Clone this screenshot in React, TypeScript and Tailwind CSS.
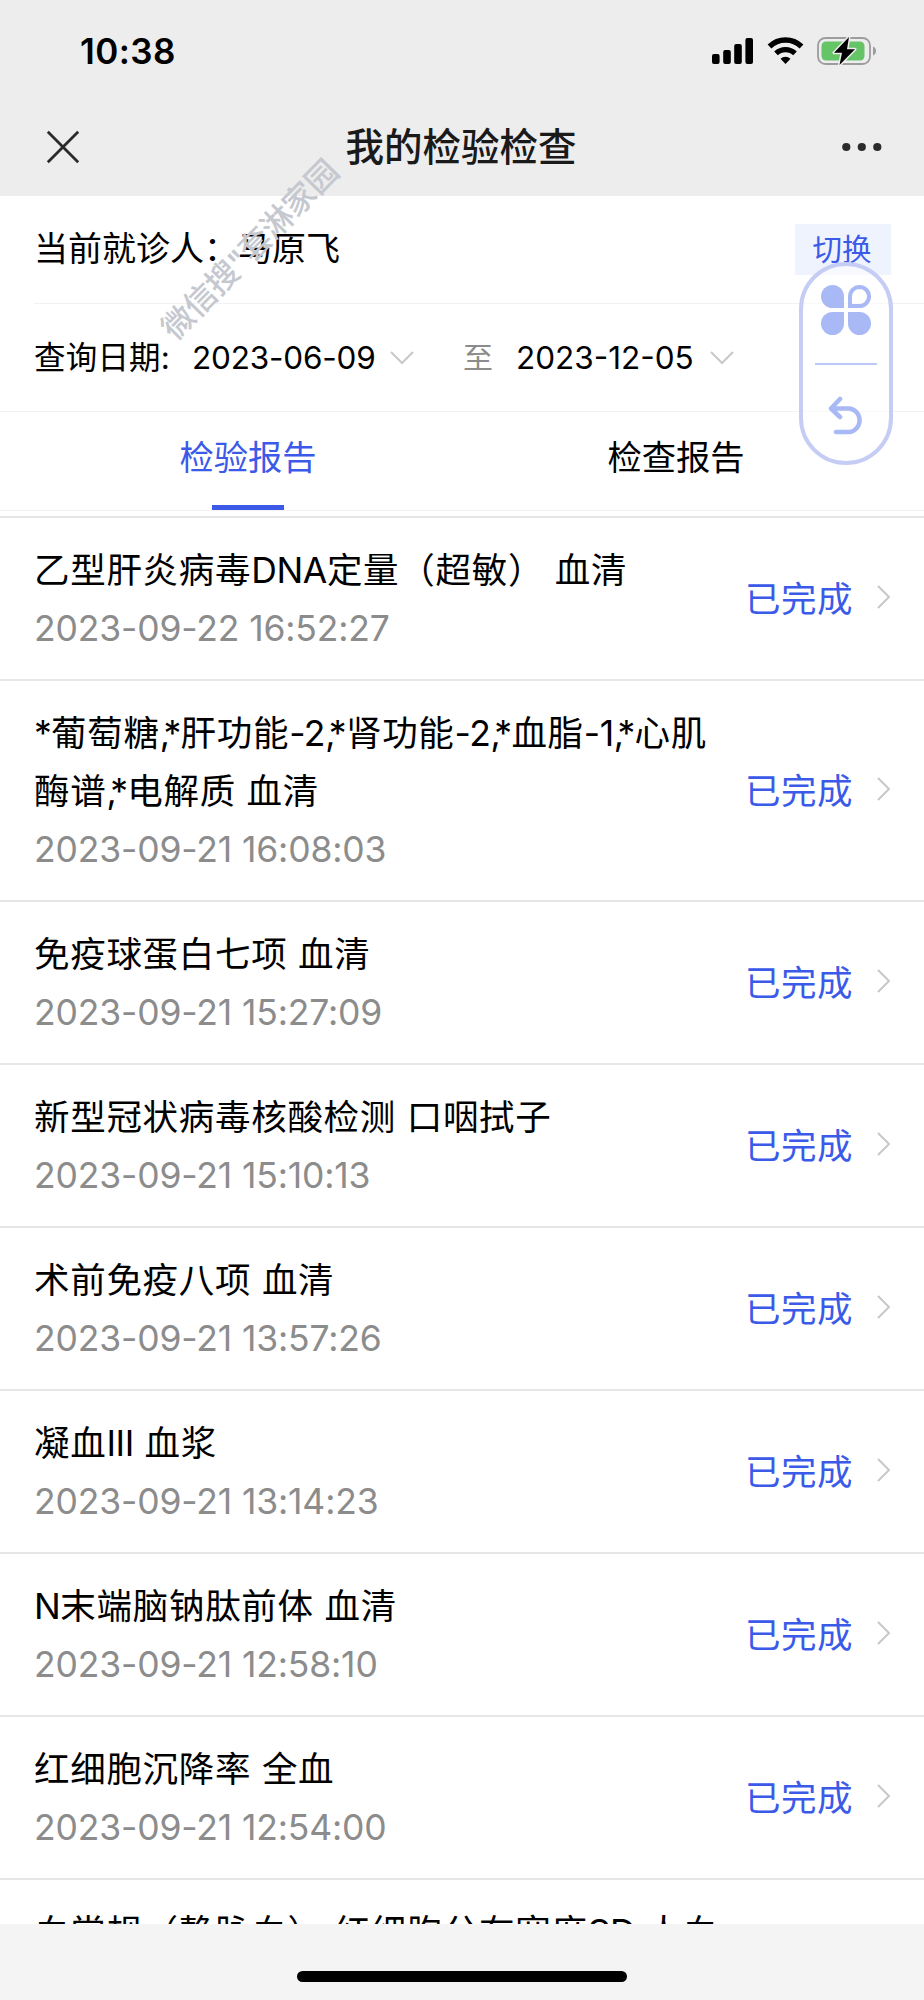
type Report = {
  name: string[];
  time: string;
};

const reports: Report[] = [
  { name: ['乙型肝炎病毒DNA定量（超敏） 血清'], time: '2023-09-22 16:52:27' },
  { name: ['*葡萄糖,*肝功能-2,*肾功能-2,*血脂-1,*心肌', '酶谱,*电解质 血清'], time: '2023-09-21 16:08:03' },
  { name: ['免疫球蛋白七项 血清'], time: '2023-09-21 15:27:09' },
  { name: ['新型冠状病毒核酸检测 口咽拭子'], time: '2023-09-21 15:10:13' },
  { name: ['术前免疫八项 血清'], time: '2023-09-21 13:57:26' },
  { name: ['凝血III 血浆'], time: '2023-09-21 13:14:23' },
  { name: ['N末端脑钠肽前体 血清'], time: '2023-09-21 12:58:10' },
  { name: ['红细胞沉降率 全血'], time: '2023-09-21 12:54:00' },
  { name: ['血常规（静脉血） 红细胞分布宽度SD 人血'], time: '2023-09-21 12:40:00' },
];

const StatusBar = () => (
  <div className="flex h-[98px] items-center justify-between pl-[80px] pr-[47px] pt-1">
    <span className="text-[35px] font-semibold leading-none tracking-[0.4px] text-black">10:38</span>
    <div className="flex items-center">
      <svg width="42" height="28" viewBox="0 0 42 28">
        <rect x="0" y="17" width="7.6" height="10" rx="2" />
        <rect x="11.2" y="13" width="7.6" height="14" rx="2" />
        <rect x="22.2" y="7" width="7.6" height="20" rx="2" />
        <rect x="33.4" y="1" width="7.6" height="26" rx="2" />
      </svg>
      <svg className="ml-[13px]" width="37" height="28" viewBox="0 0 37 28">
        <path d="M2.5 9.5a22.8 22.8 0 0 1 32 0" fill="none" stroke="#000" strokeWidth="5.4" />
        <path d="M9 16.4a13.6 13.6 0 0 1 19 0" fill="none" stroke="#000" strokeWidth="5.2" />
        <path d="M18.5 27l-5-5.2a7.4 7.4 0 0 1 10 0z" />
      </svg>
      <svg className="ml-[13px]" width="60" height="30" viewBox="0 0 60 30">
        <rect x="1" y="2" width="52" height="26" rx="7.5" fill="none" stroke="#9d9d9d" strokeWidth="1.8" />
        <rect x="4.5" y="5.5" width="43" height="19" rx="4.5" fill="#65c466" />
        <path d="M56 10.5c4 1.4 4 7.6 0 9z" fill="#9d9d9d" />
        <path
          d="M32 1L17 16.8h8L22.5 29 38 13.2h-8z"
          stroke="#ededed"
          strokeWidth="3"
          strokeLinejoin="round"
          paintOrder="stroke"
        />
      </svg>
    </div>
  </div>
);

const NavBar = () => (
  <div className="flex h-[98px] items-center justify-between pl-[46px] pr-[42px]">
    <svg width="34" height="34" viewBox="0 0 34 34" className="shrink-0">
      <path d="M1.8 1.8l30.4 30.4M32.2 1.8L1.8 32.2" stroke="#2b2b2b" strokeWidth="2.8" />
    </svg>
    <h1 className="text-[38.5px] font-medium leading-none text-[#1a1a1a]">我的检验检查</h1>
    <svg width="40" height="10" viewBox="0 0 40 10" fill="#2b2b2b">
      <circle cx="4.3" cy="5" r="4.1" />
      <circle cx="19.8" cy="5" r="4.1" />
      <circle cx="35.3" cy="5" r="4.1" />
    </svg>
  </div>
);

const ChevronDown = () => (
  <svg width="24" height="14" viewBox="0 0 24 14" fill="none">
    <path d="M1 1l11 11L23 1" stroke="#c8c8c8" strokeWidth="2" />
  </svg>
);

const ChevronRight = () => (
  <svg width="14" height="24" viewBox="0 0 14 24" fill="none">
    <path d="M1 1l11 11L1 23" stroke="#c8c8c8" strokeWidth="2" />
  </svg>
);

// Floating shortcut capsule on the right edge
const FloatingMenu = () => (
  <div className="absolute left-[799px] top-[262px] flex h-[203px] w-[94px] flex-col items-center rounded-full border-4 border-[#c5cdf5] bg-white/50">
    <svg className="mt-[19px]" width="50" height="50" viewBox="0 0 50 50" fill="#a9b9f6">
      <path d="M11.5 0A11.5 11.5 0 0 1 23 11.5V23H11.5A11.5 11.5 0 0 1 11.5 0z" />
      <path
        d="M38.5 2A9.5 9.5 0 0 1 38.5 21H29V11.5A9.5 9.5 0 0 1 38.5 2z"
        fill="none"
        stroke="#a9b9f6"
        strokeWidth="4"
      />
      <path d="M11.5 50A11.5 11.5 0 0 0 23 38.5V27H11.5A11.5 11.5 0 0 0 11.5 50z" />
      <path d="M38.5 50A11.5 11.5 0 0 1 27 38.5V27H38.5A11.5 11.5 0 0 1 38.5 50z" />
    </svg>
    <div className="mt-[28px] h-0.5 w-[62px] bg-[#bcc8f6]" />
    <svg
      className="mt-[31px]"
      width="36"
      height="40"
      viewBox="0 0 36 40"
      fill="none"
      stroke="#a9b9f6"
      strokeWidth="4.5"
      strokeLinecap="round"
      strokeLinejoin="round"
    >
      <path d="M12 3L3 12.5L12 21M3 12.5H22A12 12 0 0 1 22 36H8" />
    </svg>
  </div>
);

// Latin runs and punctuation are set tighter than the Chinese text around them
const ReportName = ({ text }: { text: string }) => (
  <>
    {text.split(/(,|\*|-\d|[A-Z]+)/).map((part, i) => {
      if (part === ',') {
        return (
          <span key={i} className="tracking-[-6.5px]">
            {part}
          </span>
        );
      }
      if (part === '*') {
        return (
          <span key={i} className="tracking-[-0.7px]">
            {part}
          </span>
        );
      }
      if (/^(-\d|[A-Z]+)$/.test(part)) {
        return (
          <span key={i} className="tracking-[-0.4px]">
            {part}
          </span>
        );
      }
      return part;
    })}
  </>
);

const ReportRow = ({ name, time }: Report) => (
  <div className="flex items-center border-b-2 border-[#e6e6e6] pb-[21px] pl-[34px] pr-[33px] pt-[24px]">
    <div className="flex-1 whitespace-nowrap leading-[58px]">
      {name.map((line) => (
        <p key={line} className="text-[35.5px] tracking-[0.7px] text-black">
          <ReportName text={line} />
        </p>
      ))}
      <p className="text-[35.5px] tracking-[-0.15px] text-[#8c8c8c]">{time}</p>
    </div>
    <span className="text-[35.5px] leading-[58px] tracking-[0.5px] text-[#3b5ae8]">已完成</span>
    <span className="ml-[24px] pb-1.5">
      <ChevronRight />
    </span>
  </div>
);

const App = () => {
  return (
    <div className="relative flex h-[2000px] w-[924px] flex-col overflow-hidden bg-white font-['Inter','Noto_Sans_CJK_SC',sans-serif]">
      <header className="shrink-0 bg-[#ededed]">
        <StatusBar />
        <NavBar />
      </header>

      <section className="shrink-0">
        <div className="ml-[34px] flex h-[108px] items-center justify-between border-b border-[#f2f2f2] pr-[33px] text-[34px] text-black">
          <span className="pb-0.5">当前就诊人：马原飞</span>
          <button className="flex h-[51px] w-[96px] items-center justify-center bg-[#eff3fe] pr-0.5 text-[29.5px] text-[#3b5ae8]">
            切换
          </button>
        </div>

        <div className="flex h-[108px] items-center border-b border-[#f2f2f2] pl-[34px] text-[31.5px] text-black">
          <span className="w-[158px] tracking-[0.2px]">查询日期:</span>
          <span className="w-[198px] tracking-[-0.2px]">2023-06-09</span>
          <ChevronDown />
          <span className="ml-[49px] w-[53px] text-[30px] text-[#8c8c8c]">至</span>
          <span className="w-[194px]">2023-12-05</span>
          <ChevronDown />
        </div>

        <div className="flex h-[99px] border-b border-[#f2f2f2] px-[34px] text-[34.3px]">
          <div className="flex flex-1 flex-col items-center justify-between pt-[20px] text-[#3b5ae8]">
            <span>检验报告</span>
            <div className="h-[5px] w-[72px] bg-[#3b5ae8]" />
          </div>
          <div className="flex flex-1 flex-col items-center pt-[20px] text-black">
            <span>检查报告</span>
          </div>
        </div>
        <div className="h-[7px] border-b-2 border-[#e6e6e6]" />
      </section>

      <main className="min-h-0 flex-1 overflow-hidden">
        {reports.map((report) => (
          <ReportRow key={report.time} {...report} />
        ))}
      </main>

      <footer className="flex h-[76px] shrink-0 justify-center bg-[#f4f4f4] pt-[47px]">
        <div className="h-[11px] w-[330px] rounded-full bg-black" />
      </footer>

      <span className="absolute left-[130px] top-[230px] w-[240px] -rotate-[45.5deg] whitespace-nowrap text-center text-[32px] font-medium leading-[40px] tracking-[-0.5px] text-[#c5c8cf]">
        微信搜"套淋家园
      </span>
      <FloatingMenu />
    </div>
  );
};

export default App;
